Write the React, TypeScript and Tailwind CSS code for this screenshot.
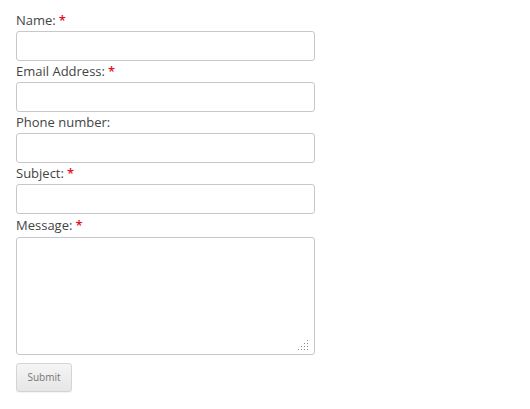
const fields = [
  { label: "Name:", required: true },
  { label: "Email Address:", required: true },
  { label: "Phone number:", required: false },
  { label: "Subject:", required: true },
];

// dotted resize grip like the old chromium textarea one
const grip: [number, number][] = [];
for (let r = 0; r < 4; r++) {
  for (let c = 3 - r; c < 4; c++) grip.push([c * 3, r * 3]);
}

export default function App() {
  return (
    <div className="min-h-[409px] bg-white pl-4 pt-[10px] font-['Open_Sans',sans-serif] text-[13px] text-[#444]">
      <form className="flex w-[299px] flex-col" onSubmit={(e) => e.preventDefault()}>
        {fields.map((f) => (
          <div key={f.label} className="flex flex-col">
            <label className="block leading-[21px]">
              {f.label}
              {f.required && <span className="ml-[3px] font-semibold text-[#e0101e]">*</span>}
            </label>
            <input
              type="text"
              className="h-[30px] w-full rounded-[3px] border border-[#c8c8c8] bg-white px-2 outline-none"
            />
          </div>
        ))}
        <label className="mt-[1px] block leading-[21px]">
          Message:<span className="ml-[3px] font-semibold text-[#e0101e]">*</span>
        </label>
        <div className="relative mt-[1px]">
          <textarea className="block h-[118px] w-full resize-none rounded-[3px] border border-[#c8c8c8] bg-white px-2 outline-none" />
          <svg className="absolute bottom-[4px] right-[6px]" width="11" height="11" viewBox="0 0 11 11">
            {grip.map(([x, y]) => (
              <rect key={`${x}-${y}`} x={x} y={y} width="1" height="1" fill="#888" />
            ))}
          </svg>
        </div>
        <div className="mt-2">
          <button
            type="submit"
            className="h-[29px] w-[56px] rounded-[3px] border border-[#d4d4d4] bg-gradient-to-b from-[#f5f5f5] to-[#e6e6e6] text-[10px] text-[#777] shadow-[0_1px_1px_rgba(0,0,0,0.05)]"
          >
            Submit
          </button>
        </div>
      </form>
    </div>
  );
}
